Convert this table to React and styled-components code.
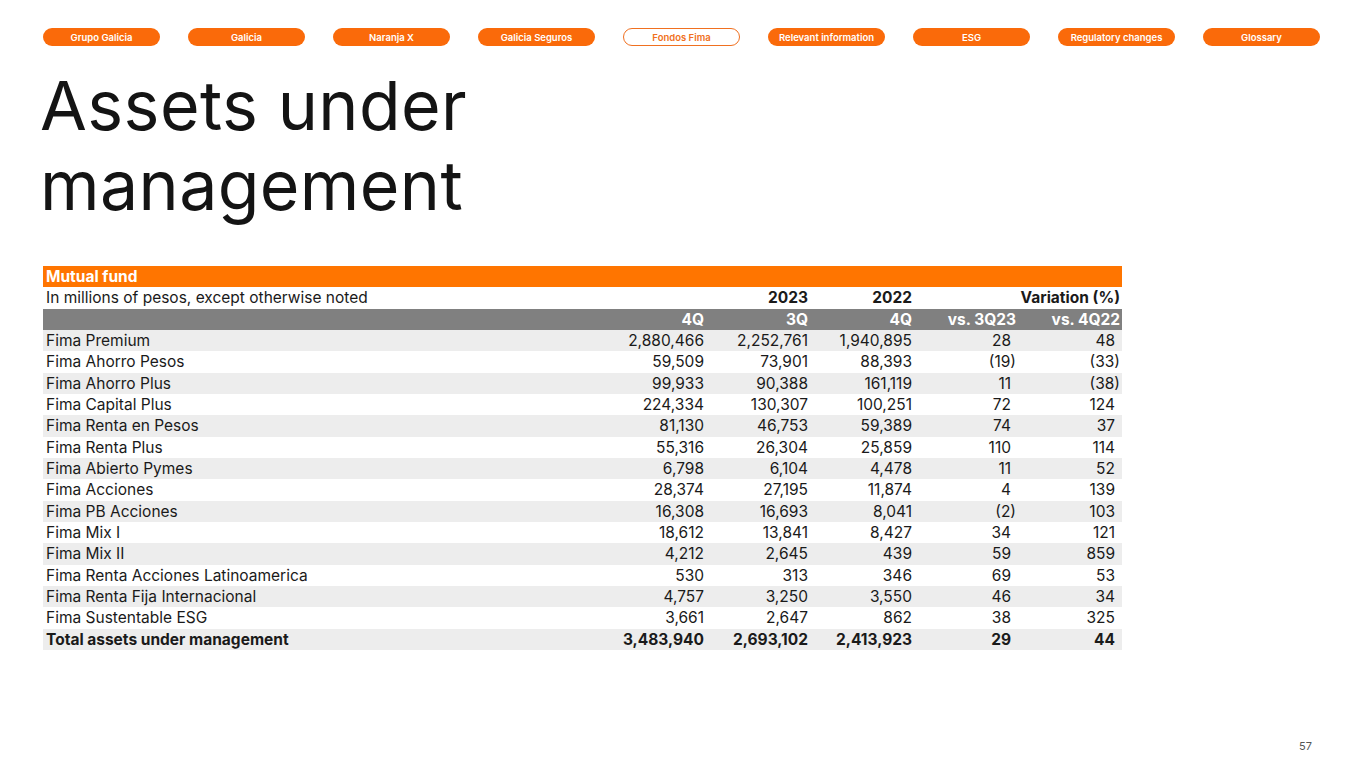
import React from "react";
import styled, { createGlobalStyle } from "styled-components";

const GlobalStyle = createGlobalStyle`
  html, body {
    margin: 0;
    padding: 0;
    background: #ffffff;
    font-family: Inter, "Noto Sans", "Liberation Sans", sans-serif;
    color: #1a1a1a;
  }
`;

// page frame
const Page = styled.div`
  position: relative;
  width: 1365px;
  height: 768px;
  padding: 28px 45px 0 43px;
  box-sizing: border-box;
  overflow: hidden;
`;

// top navigation pills
const Nav = styled.nav`
  display: flex;
  justify-content: space-between;
  align-items: center;
  height: 18px;
`;

const Pill = styled.div`
  width: 117px;
  height: 18px;
  box-sizing: border-box;
  border-radius: 9px;
  display: flex;
  align-items: center;
  justify-content: center;
  font-size: 9.5px;
  font-weight: 600;
  background: ${(props) => (props.active ? "#ffffff" : "#fa6a0a")};
  color: ${(props) => (props.active ? "#f07020" : "#ffffff")};
  border: ${(props) => (props.active ? "1.5px solid #f07020" : "none")};
`;

const Title = styled.h1`
  margin: 19px 0 0 -3px;
  font-size: 68px;
  line-height: 80px;
  font-weight: 400;
  letter-spacing: 0.4px;
  color: #141414;
`;

// table
const Table = styled.div`
  margin-top: 41px;
  width: 1079px;
  display: grid;
  grid-template-columns: 1fr repeat(5, 104px);
  font-size: 15.5px;
`;

const Row = styled.div`
  display: contents;
`;

const Cell = styled.div`
  height: 21.33px;
  line-height: 21.33px;
  padding: 0 ${(props) => (props.pad ? "7px" : "2px")} 0 3px;
  white-space: nowrap;
  text-align: ${(props) => (props.left ? "left" : "right")};
  font-weight: ${(props) => (props.bold ? 700 : 400)};
  grid-column: ${(props) => props.span || "auto"};
  background: ${(props) => props.bg || "transparent"};
  color: ${(props) => props.fg || "#1a1a1a"};
`;

const PageNumber = styled.div`
  position: absolute;
  right: 53px;
  bottom: 15px;
  font-size: 11px;
  color: #555;
`;

const tabs = [
  "Grupo Galicia",
  "Galicia",
  "Naranja X",
  "Galicia Seguros",
  "Fondos Fima",
  "Relevant information",
  "ESG",
  "Regulatory changes",
  "Glossary",
];

const funds = [
  ["Fima Premium", "2,880,466", "2,252,761", "1,940,895", "28", "48"],
  ["Fima Ahorro Pesos", "59,509", "73,901", "88,393", "(19)", "(33)"],
  ["Fima Ahorro Plus", "99,933", "90,388", "161,119", "11", "(38)"],
  ["Fima Capital Plus", "224,334", "130,307", "100,251", "72", "124"],
  ["Fima Renta en Pesos", "81,130", "46,753", "59,389", "74", "37"],
  ["Fima Renta Plus", "55,316", "26,304", "25,859", "110", "114"],
  ["Fima Abierto Pymes", "6,798", "6,104", "4,478", "11", "52"],
  ["Fima Acciones", "28,374", "27,195", "11,874", "4", "139"],
  ["Fima PB Acciones", "16,308", "16,693", "8,041", "(2)", "103"],
  ["Fima Mix I", "18,612", "13,841", "8,427", "34", "121"],
  ["Fima Mix II", "4,212", "2,645", "439", "59", "859"],
  ["Fima Renta Acciones Latinoamerica", "530", "313", "346", "69", "53"],
  ["Fima Renta Fija Internacional", "4,757", "3,250", "3,550", "46", "34"],
  ["Fima Sustentable ESG", "3,661", "2,647", "862", "38", "325"],
];

const total = ["Total assets under management", "3,483,940", "2,693,102", "2,413,923", "29", "44"];

function FundRow({ cells, striped, bold }) {
  const bg = striped ? "#ededed" : "transparent";
  return (
    <Row>
      {cells.map((c, i) => (
        <Cell
          key={i}
          left={i === 0}
          bold={bold}
          bg={bg}
          pad={i >= 4 && !c.startsWith("(")}
        >
          {c}
        </Cell>
      ))}
    </Row>
  );
}

export default function App() {
  return (
    <>
      <GlobalStyle />
      <Page>
        <Nav>
          {tabs.map((t) => (
            <Pill key={t} active={t === "Fondos Fima"}>
              {t}
            </Pill>
          ))}
        </Nav>

        <Title>
          Assets under
          <br />
          management
        </Title>

        <Table>
          <Row>
            <Cell left bold span="1 / -1" bg="#ff7500" fg="#ffffff">
              Mutual fund
            </Cell>
          </Row>
          <Row>
            <Cell left>In millions of pesos, except otherwise noted</Cell>
            <Cell bold span="2 / 4">2023</Cell>
            <Cell bold>2022</Cell>
            <Cell bold span="5 / 7">Variation (%)</Cell>
          </Row>
          <Row>
            {["", "4Q", "3Q", "4Q", "vs. 3Q23", "vs. 4Q22"].map((h, i) => (
              <Cell key={i} bold bg="#808080" fg="#ffffff">
                {h}
              </Cell>
            ))}
          </Row>
          {funds.map((f, i) => (
            <FundRow key={f[0]} cells={f} striped={i % 2 === 0} />
          ))}
          <FundRow cells={total} striped bold />
        </Table>

        <PageNumber>57</PageNumber>
      </Page>
    </>
  );
}
